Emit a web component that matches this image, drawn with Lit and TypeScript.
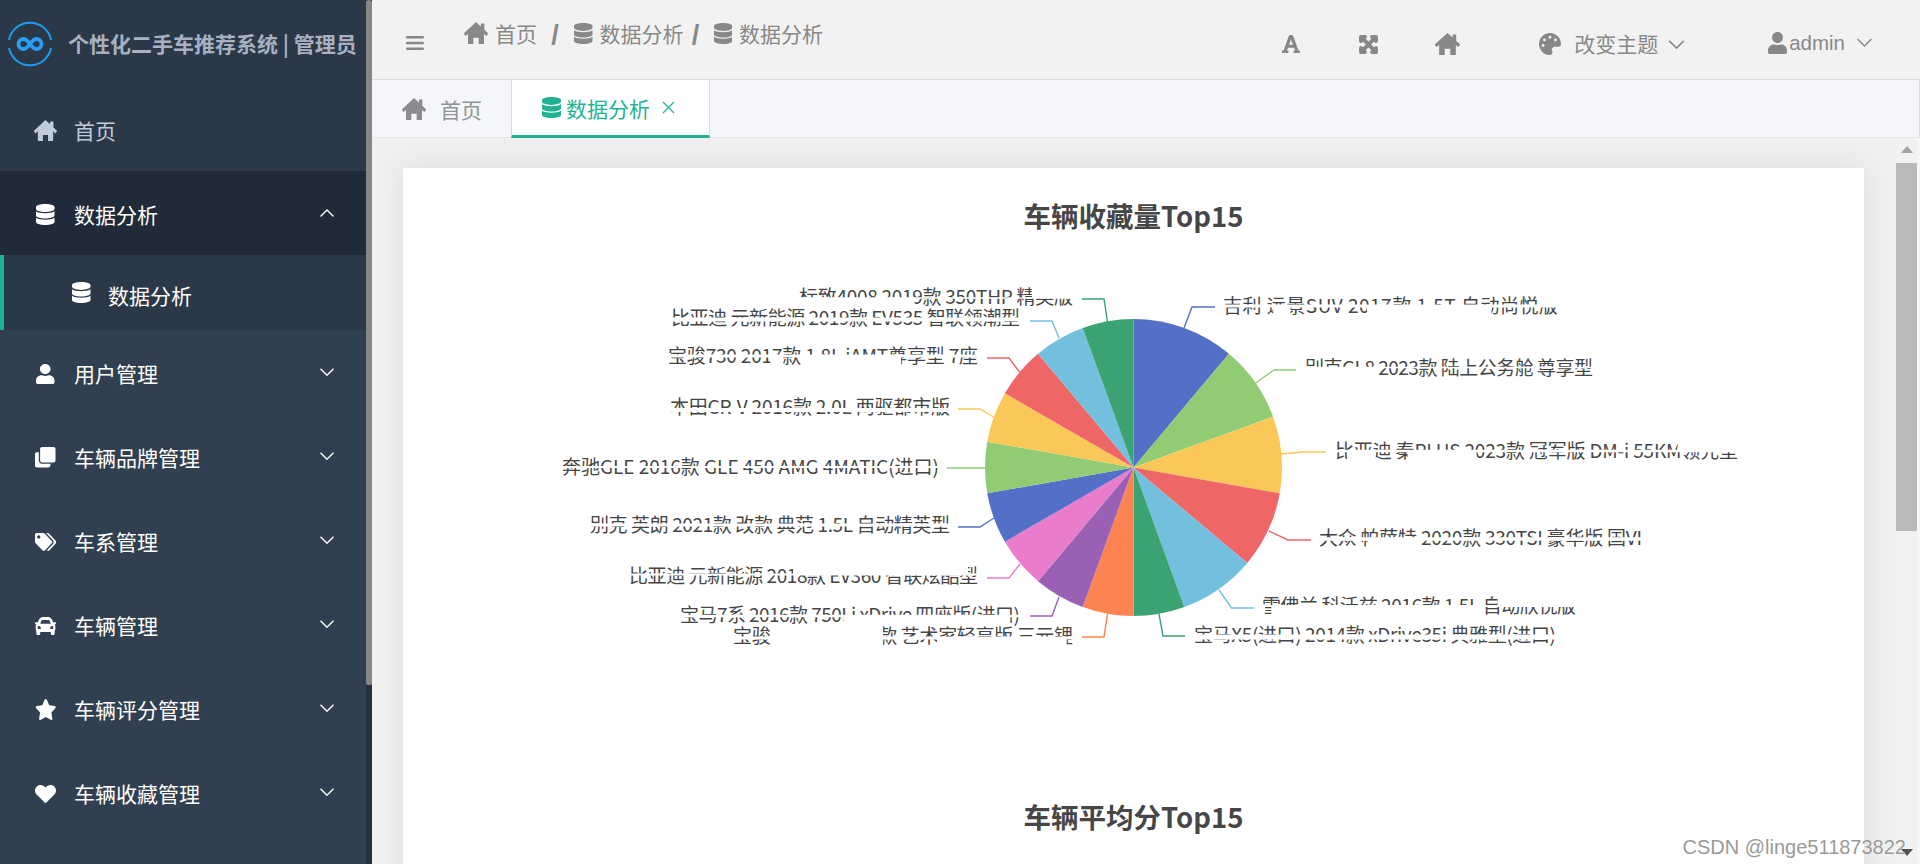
import { LitElement, html, css, svg } from "lit";
import { customElement } from "lit/decorators.js";

const P: Record<string, [string, string]> = {
  home: ["0 0 576 448", "M288 0L404 92V38Q404 30 412 30H480Q488 30 488 38V160L570 226Q580 236 572 246L546 278Q538 288 528 280L480 242V432Q480 448 464 448H352V320H224V448H112Q96 448 96 432V242L48 280Q38 288 30 278L4 246Q-4 236 6 226Z"],
  database: ["0 0 448 512", "M448 73.143v45.714C448 159.143 347.667 192 224 192S0 159.143 0 118.857V73.143C0 32.857 100.333 0 224 0s224 32.857 224 73.143zM448 176v102.857C448 319.143 347.667 352 224 352S0 319.143 0 278.857V176c48.125 33.143 136.208 48.572 224 48.572S399.874 209.143 448 176zm0 160v102.857C448 479.143 347.667 512 224 512S0 479.143 0 438.857V336c48.125 33.143 136.208 48.572 224 48.572S399.874 369.143 448 336z"],
  user: ["0 0 448 512", "M224 256c70.7 0 128-57.3 128-128S294.7 0 224 0 96 57.3 96 128s57.3 128 128 128zm89.6 32h-16.7c-22.2 10.2-46.9 16-72.9 16s-50.6-5.8-72.9-16h-16.7C60.2 288 0 348.2 0 422.4V464c0 26.5 21.5 48 48 48h352c26.5 0 48-21.5 48-48v-41.6c0-74.2-60.2-134.4-134.4-134.4z"],
  clone: ["0 0 512 512", "M464 0c26.51 0 48 21.49 48 48v288c0 26.51-21.49 48-48 48H176c-26.51 0-48-21.49-48-48V48c0-26.51 21.49-48 48-48h288M176 416c-44.112 0-80-35.888-80-80V128H48c-26.51 0-48 21.49-48 48v288c0 26.51 21.49 48 48 48h288c26.51 0 48-21.49 48-48v-48H176z"],
  tags: ["0 0 640 512", "M497.941 225.941L286.059 14.059A48 48 0 0 0 252.118 0H48C21.49 0 0 21.49 0 48v204.118a48 48 0 0 0 14.059 33.941l211.882 211.882c18.744 18.745 49.136 18.746 67.882 0l204.118-204.118c18.745-18.745 18.745-49.137 0-67.882zM112 160c-26.51 0-48-21.49-48-48s21.49-48 48-48 48 21.49 48 48-21.49 48-48 48zm513.941 133.823L421.823 497.941c-18.745 18.745-49.137 18.745-67.882 0l-.36-.36L527.64 323.522c16.999-16.999 26.36-39.6 26.36-63.64s-9.362-46.641-26.36-63.64L331.397 0h48.721a48 48 0 0 1 33.941 14.059l211.882 211.882c18.745 18.745 18.745 49.137 0 67.882z"],
  car: ["0 64 512 384", "M499.99 176h-59.87l-16.64-41.6C406.38 91.63 365.57 64 319.5 64h-127c-46.06 0-86.88 27.63-103.99 70.4L71.87 176H12.01C4.2 176-1.53 183.34.37 190.91l6 24C7.7 220.25 12.5 224 18.01 224h20.07C24.65 235.73 16 252.78 16 272v48c0 16.12 6.16 30.67 16 41.93V416c0 17.67 14.33 32 32 32h32c17.67 0 32-14.33 32-32v-32h256v32c0 17.67 14.33 32 32 32h32c17.67 0 32-14.33 32-32v-54.07c9.84-11.25 16-25.8 16-41.93v-48c0-19.22-8.65-36.27-22.07-48H494c5.51 0 10.31-3.75 11.64-9.09l6-24c1.89-7.57-3.84-14.91-11.65-14.91zm-352.06-17.83c7.29-18.22 24.94-30.17 44.57-30.17h127c19.63 0 37.28 11.95 44.57 30.17L384 208H128l19.93-49.83zM96 319.8c-19.2 0-32-12.76-32-31.9S76.8 256 96 256s48 28.71 48 47.85-28.8 15.95-48 15.95zm320 0c-19.2 0-48 3.19-48-15.95S396.8 256 416 256s32 12.76 32 31.9-12.8 31.9-32 31.9z"],
  star: ["0 0 576 512", "M259.3 17.8L194 150.2 47.9 171.5c-26.2 3.8-36.7 36.1-17.7 54.6l105.7 103-25 145.5c-4.5 26.3 23.2 46 46.4 33.7L288 439.6l130.7 68.7c23.2 12.2 50.9-7.4 46.4-33.7l-25-145.5 105.7-103c19-18.5 8.5-50.8-17.7-54.6L382 150.2 316.7 17.8c-11.7-23.6-45.6-23.9-57.4 0z"],
  heart: ["0 32 512 448", "M462.3 62.6C407.5 15.9 326 24.3 275.7 76.2L256 96.5l-19.7-20.3C186.1 24.3 104.5 15.9 49.7 62.6c-62.8 53.6-66.1 149.8-9.9 207.9l193.5 199.8c12.5 12.9 32.8 12.9 45.3 0l193.5-199.8c56.3-58.1 53-154.3-9.8-207.9z"],
  palette: ["0 0 512 512", "M204.3 5C104.9 24.4 24.8 104.3 5.2 203.4c-37 187 131.7 326.4 258.8 306.7 41.2-6.4 61.4-54.6 42.5-91.7-23.1-45.4 9.9-98.4 60.9-98.4h79.7c35.8 0 64.8-29.6 64.9-65.3C511.5 97.1 368.1-26.9 204.3 5zM96 320c-17.7 0-32-14.3-32-32s14.3-32 32-32 32 14.3 32 32-14.3 32-32 32zm32-128c-17.7 0-32-14.3-32-32s14.3-32 32-32 32 14.3 32 32-14.3 32-32 32zm128-64c-17.7 0-32-14.3-32-32s14.3-32 32-32 32 14.3 32 32-14.3 32-32 32zm128 64c-17.7 0-32-14.3-32-32s14.3-32 32-32 32 14.3 32 32-14.3 32-32 32z"],
  font: ["0 32 448 448", "M432 416h-23.41L277.88 53.69A32 32 0 0 0 247.58 32h-47.16a32 32 0 0 0-30.3 21.69L39.41 416H16a16 16 0 0 0-16 16v32a16 16 0 0 0 16 16h128a16 16 0 0 0 16-16v-32a16 16 0 0 0-16-16h-19.6l23.3-64h152.6l23.3 64H304a16 16 0 0 0-16 16v32a16 16 0 0 0 16 16h128a16 16 0 0 0 16-16v-32a16 16 0 0 0-16-16zM176.85 272L224 142.51 271.15 272z"],
  expand: ["-25 7 498 498", "M448 344v112a23.94 23.94 0 0 1-24 24H312c-21.39 0-32.09-25.9-17-41l36.2-36.2L224 295.6 116.77 402.9 153 439c15.09 15.1 4.39 41-17 41H24a23.94 23.94 0 0 1-24-24V344c0-21.4 25.89-32.1 41-17l36.19 36.2L184.46 256 77.18 148.7 41 185c-15.1 15.1-41 4.4-41-17V56a23.94 23.94 0 0 1 24-24h112c21.39 0 32.09 25.9 17 41l-36.2 36.2L224 216.4l107.23-107.3L295 73c-15.09-15.1-4.39-41 17-41h112a23.94 23.94 0 0 1 24 24v112c0 21.4-25.89 32.1-41 17l-36.19-36.2L263.54 256l107.28 107.3L407 327.1c15.1-15.2 41-4.5 41 16.9z"],
};

const icon = (n: string, cls = "") =>
  html`<svg class="ic i-${n} ${cls}" viewBox="${P[n][0]}" preserveAspectRatio="none" fill="currentColor"><path d="${P[n][1]}"></path></svg>`;

const chev = (up = false, cls = "") =>
  html`<svg class="chev ${cls}" viewBox="0 0 14 8" fill="none" stroke="currentColor" stroke-width="1.4"><polyline points=${up ? "0.5,7.5 7,1 13.5,7.5" : "0.5,0.8 7,7.2 13.5,0.8"}></polyline></svg>`;

type L = {
  t: string; c: string; x0: number; x1: number; y0: number; y1: number; mid: number; gap: number;
  hb?: number[][]; ht?: number[][]; line: number[];
};
const C = ["#5470c6", "#91cc75", "#fac858", "#ee6666", "#73c0de", "#3ba272", "#fc8452", "#9a60b4", "#ea7ccc"];
const labels: L[] = [
  { t: "吉利 远景SUV 2017款 1.5T 自动尚悦版", c: C[0], x0: 1223, x1: 1558, y0: 296, y1: 316, mid: 306, gap: 3, hb: [[0.15, 0.2], [0.43, 0.8]], ht: [[0.94, 1]], line: [1184, 328, 1192, 307, 1215, 307] },
  { t: "别克GL8 2023款 陆上公务舱 尊享型", c: C[1], x0: 1305, x1: 1593, y0: 359, y1: 378, mid: 367.5, gap: 1.5, hb: [[0, 0.25]], line: [1255.5, 383, 1274, 370, 1296, 370] },
  { t: "比亚迪 秦PLUS 2023款 冠军版 DM-i 55KM领先型", c: C[2], x0: 1335, x1: 1738, y0: 442, y1: 461, mid: 451, gap: 2.5, hb: [[0.03, 0.1], [0.18, 0.35]], ht: [[0.85, 1]], line: [1280, 454, 1303, 452, 1326, 452] },
  { t: "大众 帕萨特 2020款 330TSI 豪华版 国VI", c: C[3], x0: 1319, x1: 1642, y0: 529, y1: 548, mid: 539, gap: 3.5, hb: [[0.15, 0.3]], line: [1269, 531, 1288, 540, 1311, 540] },
  { t: "雪佛兰 科沃兹 2016款 1.5L 自动欣悦版", c: C[4], x0: 1262, x1: 1576, y0: 597, y1: 616, mid: 606, gap: 2, hb: [[0.03, 0.7]], ht: [[0.75, 1]], line: [1219, 590, 1231.5, 608, 1254, 608] },
  { t: "宝马X5(进口) 2014款 xDrive35i 典雅型(进口)", c: C[5], x0: 1194, x1: 1556, y0: 626, y1: 645, mid: 637, gap: 5, line: [1159, 614, 1163, 636, 1185, 636] },
  { t: "宝骏KiWi EV 2021款 艺术家轻享版 三元锂", c: C[6], x0: 733, x1: 1073, y0: 627, y1: 646, mid: 638, gap: 3, ht: [[0.11, 0.44]], hb: [[0.11, 0.44], [0.6, 0.98]], line: [1107.5, 614, 1104, 637, 1082, 637] },
  { t: "宝马7系 2016款 750Li xDrive 四座版(进口)", c: C[7], x0: 680, x1: 1020, y0: 606, y1: 625, mid: 616, gap: 2.5, hb: [[0.48, 0.97]], line: [1059, 597, 1052, 616, 1030, 616] },
  { t: "比亚迪 元新能源 2018款 EV360 智联炫酷型", c: C[8], x0: 629, x1: 978, y0: 567, y1: 586, mid: 574.5, gap: 2, ht: [[0.47, 0.97]], line: [1020, 564, 1009, 578, 987, 578] },
  { t: "别克 英朗 2021款 改款 典范 1.5L 自动精英型", c: C[0], x0: 590, x1: 950, y0: 516, y1: 535, mid: 525, gap: 3, line: [994, 518, 980, 527, 958, 527] },
  { t: "奔驰GLE 2016款 GLE 450 AMG 4MATIC(进口)", c: C[1], x0: 562, x1: 939, y0: 458, y1: 477, mid: 467, gap: 2, line: [986, 468, 963, 468, 947, 468] },
  { t: "本田CR-V 2016款 2.0L 两驱都市版", c: C[2], x0: 670, x1: 950, y0: 398, y1: 417, mid: 410, gap: 4, line: [993.5, 417, 980, 409, 958, 409] },
  { t: "宝骏730 2017款 1.8L iAMT尊享型 7座", c: C[3], x0: 668, x1: 978, y0: 347, y1: 366, mid: 356, gap: 3, hb: [[0.33, 0.37], [0.43, 0.75]], line: [1019.5, 372, 1009, 358, 987, 358] },
  { t: "比亚迪 元新能源 2019款 EV535 智联领潮型", c: C[4], x0: 671, x1: 1020, y0: 309, y1: 328, mid: 319.5, gap: 4, line: [1059, 338, 1052, 321, 1030, 321] },
  { t: "标致4008 2019款 350THP 精英版", c: C[5], x0: 799, x1: 1073, y0: 288, y1: 307, mid: 298, gap: 1.5, hb: [[0, 0.42]], ht: [[0.85, 1]], line: [1107.5, 322, 1104, 299, 1082, 299] },
];
const angles = [0, 40, 70, 100, 130, 160, 180, 200, 220, 240, 260, 280, 300, 320, 340, 360];
const CX = 1133.5, CY = 467.5, R = 148.5;
const pt = (a: number) => {
  const r = (a * Math.PI) / 180;
  return `${(CX + R * Math.sin(r)).toFixed(2)} ${(CY - R * Math.cos(r)).toFixed(2)}`;
};

const mask = (x: number, y: number, w: number, h: number) =>
  svg`<rect x=${x} y=${y} width=${w} height=${h} fill="#fff"></rect>`;

const labelTpl = (l: L) => {
  const w = l.x1 - l.x0;
  const span = (r: number[]) => [l.x0 + r[0] * w, (r[1] - r[0]) * w + 0.5];
  return svg`
    <text class="lbl" x=${l.x0} y=${l.y1 - 3} textLength=${w} lengthAdjust="spacing">${l.t}</text>
    ${mask(l.x0 - 2, l.mid - l.gap / 2, w + 4, l.gap)}
    ${(l.hb || []).map((r) => { const [a, b] = span(r); return mask(a, l.mid, b, l.y1 - l.mid + 1); })}
    ${(l.ht || []).map((r) => { const [a, b] = span(r); return mask(a, l.y0 - 1, b, l.mid - l.y0 + 1); })}
    <polyline points=${l.line.join(",")} fill="none" stroke=${l.c} stroke-width="1.4"></polyline>`;
};

const menu: [string, string][] = [
  ["user", "用户管理"],
  ["clone", "车辆品牌管理"],
  ["tags", "车系管理"],
  ["car", "车辆管理"],
  ["star", "车辆评分管理"],
  ["heart", "车辆收藏管理"],
];

@customElement("app-root")
export class AppRoot extends LitElement {
  static styles = css`
    :host {
      display: grid;
      grid-template-columns: 372px 1fr;
      width: 1920px;
      height: 864px;
      overflow: hidden;
      position: relative;
      font-family: "Noto Sans CJK SC", "Liberation Sans", sans-serif;
      font-size: 21px;
      background: #f0f0f0;
    }
    .ic { display: block; flex: none; width: 20px; height: 20px; }
    .chev { width: 14px; height: 8px; display: block; flex: none; }

    /* sidebar */
    .side { display: flex; height: 864px; background: #233240; overflow: hidden; }
    .menu { width: 366px; flex: none; background: #304050; color: #fff; }
    .upper { background: #2a3848; }
    .brand { height: 87px; display: flex; align-items: center; padding-left: 7px; }
    .logo { width: 46px; height: 46px; flex: none; }
    .brand-t { margin: 0 0 2px 15px; color: #a7b1c2; font-weight: 700; font-size: 21px; white-space: nowrap; }
    .row { height: 84px; display: flex; align-items: center; padding-left: 34px; box-sizing: border-box; position: relative; }
    .row.open { background: #1f2b39; }
    .row.home { color: #c0ccda; }
    .ibox { width: 23px; height: 21px; display: flex; justify-content: center; align-items: center; margin: 3px 17px 0 0; }
    .ibox .i-home { width: 23px; height: 21px; }
    .ibox .i-database { width: 18.5px; height: 21px; }
    .ibox .i-user { width: 18.5px; height: 20px; }
    .ibox .i-clone { width: 20.5px; height: 20.5px; }
    .ibox .i-tags { width: 21.5px; height: 18px; }
    .ibox .i-car { width: 21px; height: 18px; }
    .ibox .i-star { width: 21.5px; height: 21px; }
    .ibox .i-heart { width: 21px; height: 18px; }
    .row .txt { padding-top: 1px; line-height: 30px; }
    .upper .row .txt { padding-top: 2px; }
    .row .chev { position: absolute; left: 320px; top: 38px; }
    .sub { height: 75px; display: flex; align-items: center; padding-left: 66px; box-sizing: border-box; border-left: 4px solid #1ab394; }
    .sub .ibox { margin: 0 15px 0 0; width: 23px; }
    .sub .txt { padding-top: 4px; }
    .bar { width: 6px; flex: none; }
    .thumb { height: 685px; background: #868686; border-radius: 3px 3px 2px 2px; }

    /* main */
    .main { display: flex; flex-direction: column; min-width: 0; height: 864px; }
    .top { height: 79px; flex: none; background: #f2f2f2; border-bottom: 1px solid #d8dce5; display: flex; align-items: center; color: #888; }
    .burger { width: 18px; height: 14px; margin: 7px 0 0 34px; flex: none; }
    .crumbs { display: flex; align-items: center; margin: 0 0 13px 40px; height: 30px; white-space: nowrap; }
    .crumbs .i-home { width: 24px; height: 22px; }
    .crumbs .i-database { width: 18.5px; height: 21px; }
    .crumbs .t { margin-left: 7px; line-height: 30px; }
    .crumbs .t.n { margin-left: 7px; }
    .sep { width: 8px; font-weight: 700; color: #888; font-family: "Liberation Sans", sans-serif; font-size: 27px; line-height: 30px; margin-top: 3px; display: flex; justify-content: center; }
    .sep.a { margin-left: 14px; margin-right: 15px; }
    .sep.b { margin-left: 8px; margin-right: 14px; }
    .tools { margin-left: auto; margin-top: 9px; display: flex; align-items: center; padding-right: 48px; white-space: nowrap; }
    .tools .i-font { width: 18px; height: 18px; }
    .tools .i-expand { margin-left: 59px; width: 19px; height: 19px; stroke: currentColor; stroke-width: 46px; }
    .tools .i-home { width: 25px; height: 22px; margin-left: 57px; }
    .tools .i-palette { height: 22px; width: 22px; margin-left: 79px; }
    .tools .theme { margin: -2px 0 0 13px; line-height: 30px; }
    .tools .chev { width: 17px; height: 9px; margin-left: 10px; }
    .tools .i-user { height: 22px; width: 19px; margin-left: 83px; margin-top: -3px; }
    .tools .adm { margin-left: 2px; font-family: "Liberation Sans", sans-serif; line-height: 30px; font-size: 20.5px; margin-top: -3px; }
    .tools .chev.u { margin-left: 12px; margin-top: -3px; width: 15px; }

    .tabs { height: 57px; flex: none; background: #f5f6fa; border-bottom: 1px solid #e4e7ed; display: flex; box-sizing: content-box; border-right: 1px solid #d8dce5; }
    .tab { display: flex; align-items: center; color: #8b8c8f; box-sizing: border-box; height: 57px; }
    .tab.one { width: 139px; padding-left: 30px; }
    .tab.one .ic { height: 22px; width: 24px; margin-right: 14px; }
    .tab.one span { color: #909399; }
    .tab.act {
      width: 199px; background: #fff; color: #1fb392; padding-left: 30px;
      border-left: 1px solid #d8dce5; border-right: 1px solid #d8dce5; height: 58px;
      border-bottom: 3px solid #1fb392;
    }
    .tab.act .ic { height: 21px; width: 19px; margin-right: 5px; }
    .x { width: 13px; height: 13px; margin-left: 12px; flex: none; }
    .content { flex: 1; min-height: 0; display: flex; }
    .scroll { flex: 1; min-width: 0; padding: 30px 32px 0 31px; overflow: hidden; }
    .card { background: #fff; box-shadow: 0 0 30px rgba(0, 0, 0, 0.08); padding-top: 27px; height: 900px; }
    .title { height: 40px; line-height: 40px; text-align: center; font-size: 27.5px; font-weight: 700; color: #464646; }
    .chart { display: block; width: 1461px; height: 561px; }
    .lbl { font-size: 19px; fill: #454545; font-family: "Noto Sans CJK SC", "Liberation Sans", sans-serif; }
    .vbar { width: 24px; flex: none; background: #f1f1f1; box-sizing: border-box; border-right: 3px solid #f5f6fa; display: flex; flex-direction: column; align-items: center; position: relative; }
    .up { width: 0; height: 0; border: 6px solid transparent; border-top: 0; border-bottom: 7px solid #a3a3a3; margin: 8px 0 10px; }
    .vthumb { width: 100%; height: 368px; background: #b9b9b9; }
    .down { width: 0; height: 0; border: 6px solid transparent; border-bottom: 0; border-top: 7px solid #505050; margin-top: auto; margin-bottom: 8px; }
    .mark { position: absolute; right: 14px; bottom: 5px; color: #9a9a9a; font-family: "Liberation Sans", sans-serif; font-size: 20px; text-shadow: 0 0 1px #fff; white-space: nowrap; }
  `;

  render() {
    return html`
      <aside class="side">
        <nav class="menu">
          <div class="upper">
            <div class="brand">
              <svg class="logo" viewBox="0 0 46 46" fill="none">
                <path d="M2 19A21.4 21.4 0 0 1 44 19M44 27A21.4 21.4 0 0 1 2 27" stroke="#1c9cf0" stroke-width="2"></path>
                <path d="M23 23c-2.5-3.5-4-5-6.5-5a5 5 0 0 0 0 10c2.5 0 4-1.5 6.5-5s4-5 6.5-5a5 5 0 0 1 0 10c-2.5 0-4-1.5-6.5-5z" stroke="#2a9df4" stroke-width="3.8"></path>
              </svg>
              <span class="brand-t">个性化二手车推荐系统 | 管理员</span>
            </div>
            <div class="row home"><span class="ibox">${icon("home")}</span><span class="txt">首页</span></div>
            <div class="row open">
              <span class="ibox">${icon("database")}</span><span class="txt">数据分析</span>${chev(true)}
            </div>
            <div class="sub"><span class="ibox">${icon("database")}</span><span class="txt">数据分析</span></div>
          </div>
          ${menu.map(
            ([i, t]) => html`<div class="row"><span class="ibox">${icon(i)}</span><span class="txt">${t}</span>${chev()}</div>`
          )}
        </nav>
        <div class="bar"><div class="thumb"></div></div>
      </aside>

      <main class="main">
        <header class="top">
          <svg class="burger" viewBox="0 0 18 14" fill="none" stroke="#888" stroke-width="2.4" stroke-linecap="round">
            <path d="M1.2 1.2H16.8M1.2 7H16.8M1.2 12.8H16.8"></path>
          </svg>
          <div class="crumbs">
            ${icon("home")}<span class="t">首页</span>
            <span class="sep a">/</span>
            ${icon("database")}<span class="t n">数据分析</span>
            <span class="sep b">/</span>
            ${icon("database")}<span class="t n">数据分析</span>
          </div>
          <div class="tools">
            ${icon("font")}
            ${icon("expand")}
            ${icon("home")}
            ${icon("palette")}
            <span class="theme">改变主题</span>${chev()}
            ${icon("user")}
            <span class="adm">admin</span>${chev(false, "u")}
          </div>
        </header>
        <div class="tabs">
          <div class="tab one">${icon("home")}<span>首页</span></div>
          <div class="tab act">
            ${icon("database")}<span>数据分析</span>
            <svg class="x" viewBox="0 0 13 13" stroke="currentColor" stroke-width="1.2"><path d="M1 1L12 12M12 1L1 12"></path></svg>
          </div>
        </div>
        <div class="content">
          <div class="scroll">
            <section class="card">
              <div class="title">车辆收藏量Top15</div>
              <svg class="chart" viewBox="403 235 1461 561">
                ${labels.map((l) => labelTpl(l))}
                ${labels.map(
                  (l, i) => svg`<path d="M${CX} ${CY}L${pt(angles[i])}A${R} ${R} 0 0 1 ${pt(angles[i + 1])}Z" fill=${l.c}></path>`
                )}
              </svg>
              <div class="title">车辆平均分Top15</div>
            </section>
          </div>
          <div class="vbar"><i class="up"></i><div class="vthumb"></div><i class="down"></i></div>
        </div>
      </main>
      <div class="mark">CSDN @linge511873822</div>
    `;
  }
}
